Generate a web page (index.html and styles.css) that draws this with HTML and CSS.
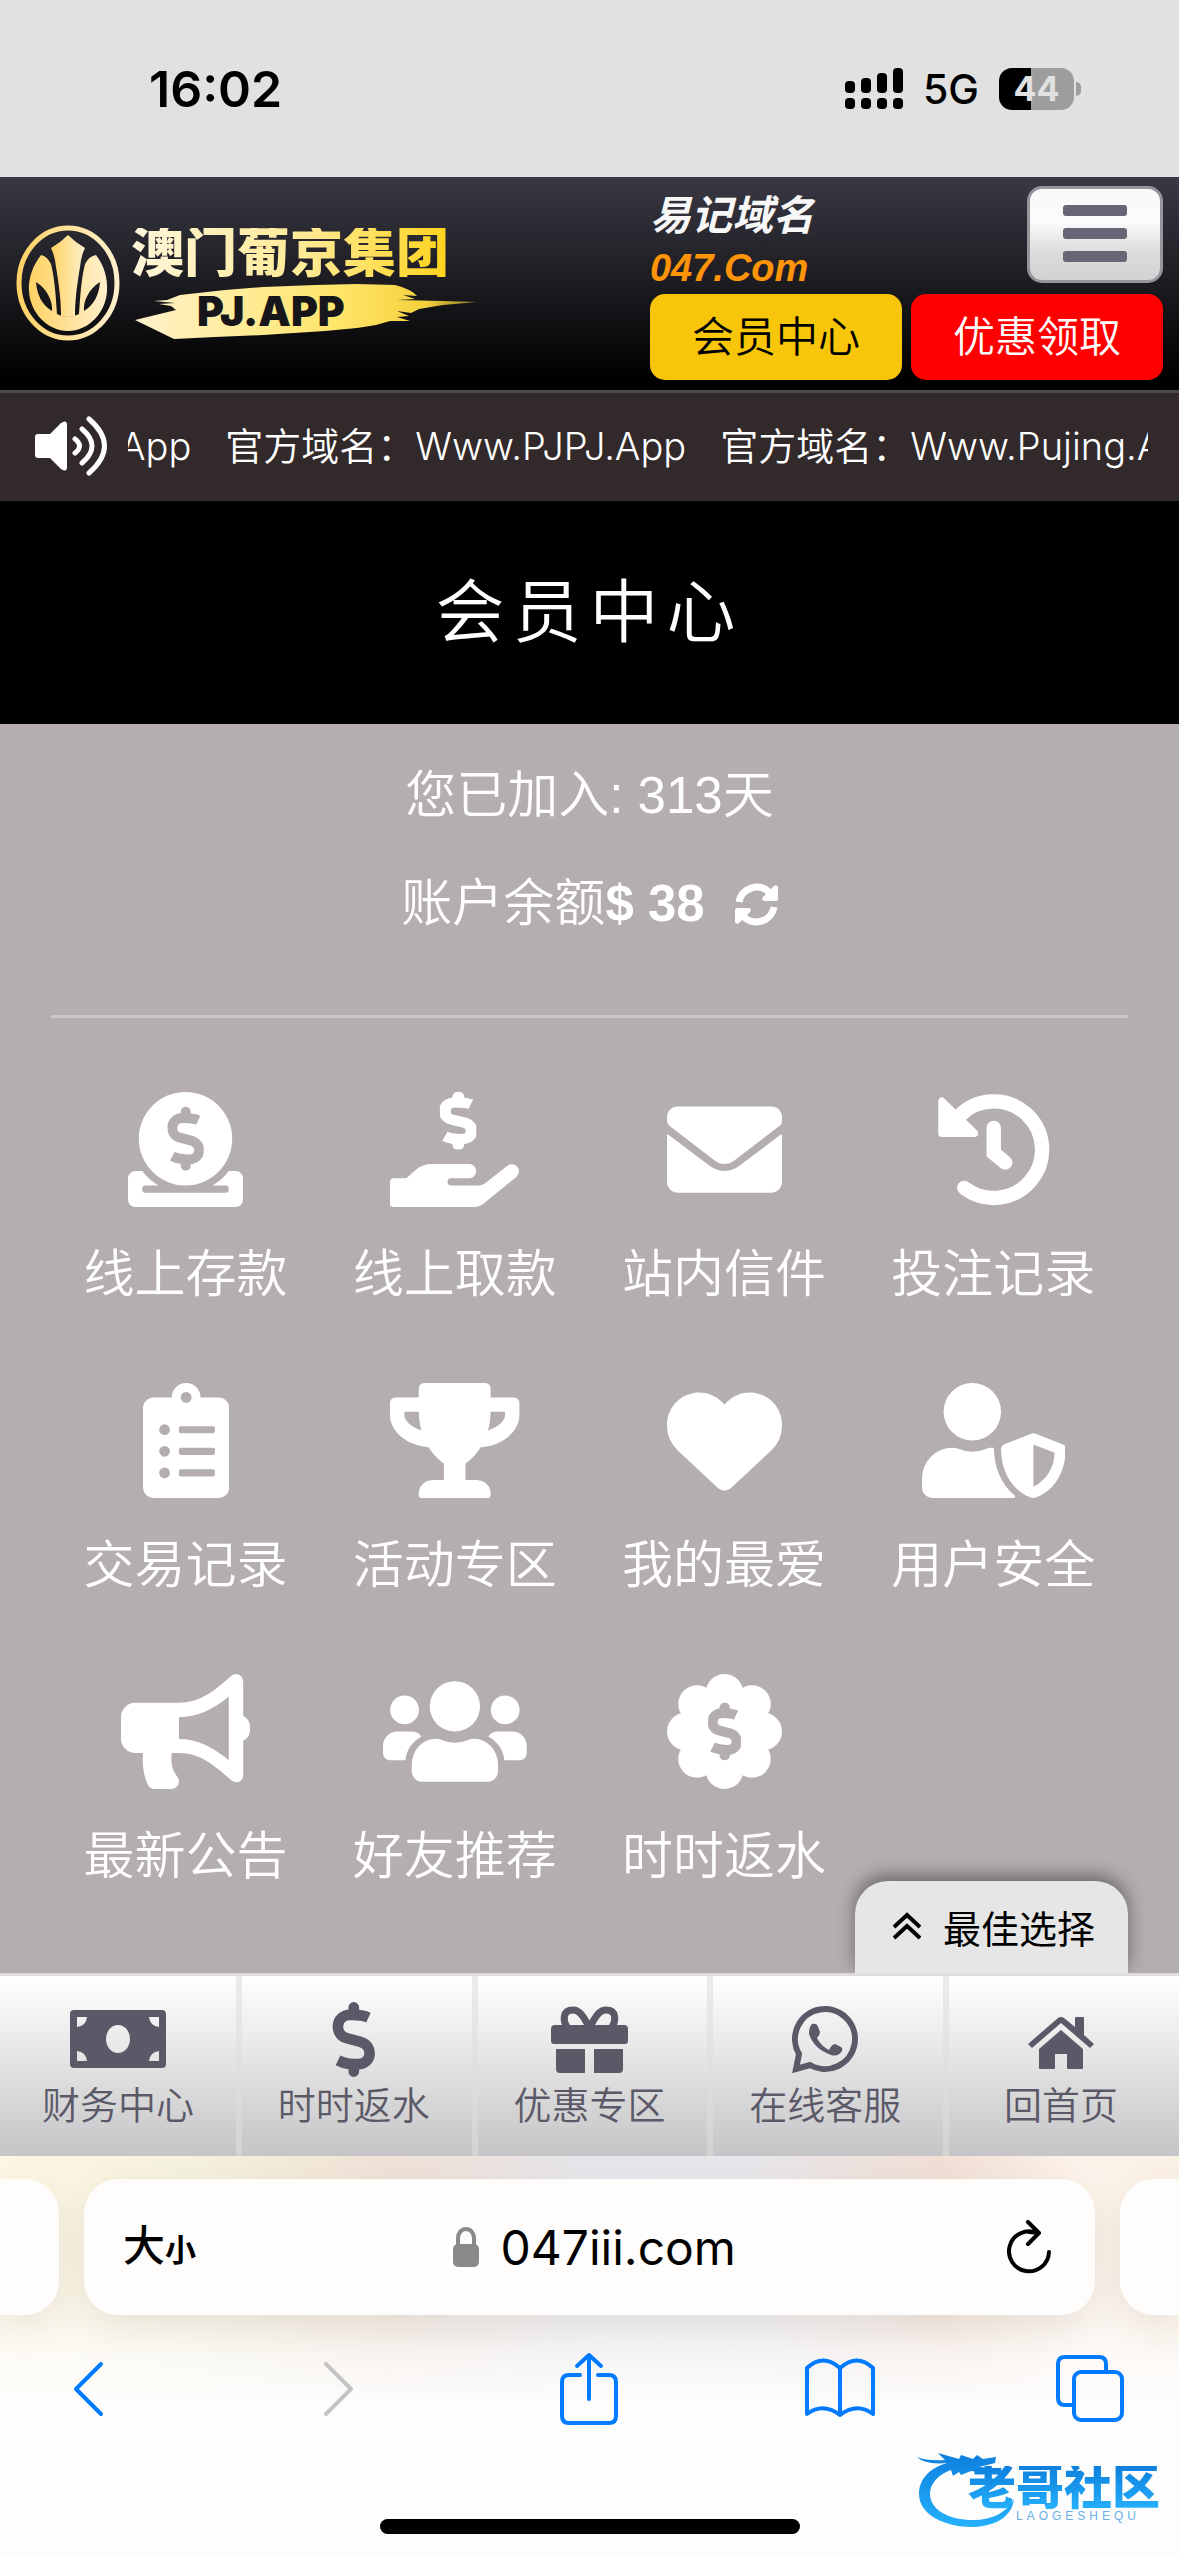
FILE: index.html
```
<!DOCTYPE html>
<html lang="zh-CN">
<head>
<meta charset="UTF-8">
<meta name="viewport" content="width=device-width, initial-scale=1.0">
<title>会员中心</title>
<link rel="stylesheet" href="styles.css">
</head>
<body>

<!-- shared dollar shape -->
<svg class="defs" aria-hidden="true">
    <symbol id="dollar" viewBox="0 0 160 288" preserveAspectRatio="none">
        <path d="M136 62C112 51 88 52 68 52C10 52 8 128 54 139L106 153C156 168 150 236 96 236C68 236 50 236 22 222" fill="none"/>
        <path d="M81 24V50M81 238V264" fill="none" stroke-linecap="round"/>
    </symbol>
</svg>

<div class="status">
    <span class="time">16:02</span>
    <div class="status-right">
        <svg width="58" height="42" viewBox="0 0 58 42">
            <rect x="0" y="13" width="10" height="12" rx="4"/><rect x="16" y="10" width="10" height="15" rx="4"/>
            <rect x="32" y="5" width="10" height="20" rx="4"/><rect x="48" y="0" width="10" height="25" rx="4"/>
            <rect x="0" y="30" width="10" height="11" rx="4"/><rect x="16" y="30" width="10" height="11" rx="4"/>
            <rect x="32" y="30" width="10" height="11" rx="4"/><rect x="48" y="30" width="10" height="11" rx="4"/>
        </svg>
        <span class="net">5G</span>
        <span class="battery">44</span>
    </div>
</div>

<header class="header">
    <a class="brand" href="#">
        <svg width="104" height="116" viewBox="0 0 104 116" aria-hidden="true">
            <defs>
                <linearGradient id="gold" x1="0" x2="1"><stop offset="0" stop-color="#ffd264"/><stop offset="1" stop-color="#fff0cd"/></linearGradient>
            </defs>
            <ellipse cx="52" cy="58" rx="49" ry="55" fill="none" stroke="url(#gold)" stroke-width="5"/>
            <path fill="url(#gold)" d="M52 10Q60 18 69 23Q65 31 64 42C61 60 59 75 59 91Q52 93 45 91C45 75 43 60 40 42Q39 31 35 23Q44 18 52 10Z"/>
            <path fill="url(#gold)" fill-rule="evenodd" d="M25 30Q31 31 35 39C39 55 40 75 41 89Q52 95 63 89C64 75 65 55 69 39Q73 31 80 30C88 40 92 54 91 66C90 88 72 106 52 106S14 88 13 66C12 54 17 40 25 30ZM20 57C21 70 26 80 36 86C37 76 31 64 20 57ZM84 57C73 64 67 76 68 86C78 80 83 70 84 57Z"/>
        </svg>
        <span class="brand-text">
            <span class="brand-name">澳门葡京集团</span>
            <span class="brand-site">
                <svg class="brush" width="343" height="55" viewBox="0 0 343 55" aria-hidden="true">
                    <defs>
                        <linearGradient id="paint" x1="0" x2="1"><stop offset="0" stop-color="#fff2cc"/><stop offset=".6" stop-color="#ffe568"/><stop offset=".85" stop-color="#f5d13c"/><stop offset="1" stop-color="#8f7a26"/></linearGradient>
                    </defs>
                    <path fill="url(#paint)" d="M0 36L41 26L36 22L24 20L40 19L19 17L32 16L45 11L90 6L128 3L180 1L222 0L260 1Q276 5 282 12L268 11L280 15L262 16L308 17L342 18L308 21L284 25L276 29L262 27L274 32L262 33L275 37L255 37L241 41L222 44L190 47L128 51L80 53L39 55Z"/>
                </svg>
                <span class="brand-domain">PJ.APP</span>
            </span>
        </span>
    </a>
    <div class="header-right">
        <div class="header-top">
            <div class="easy">
                <div class="easy-label">易记域名</div>
                <div class="easy-domain">047.Com</div>
            </div>
            <button class="menu-btn" type="button" aria-label="菜单">
                <span></span><span></span><span></span>
            </button>
        </div>
        <div class="header-btns">
            <a class="btn btn-member" href="#">会员中心</a>
            <a class="btn btn-promo" href="#">优惠领取</a>
        </div>
    </div>
</header>

<div class="notice">
    <svg width="72" height="60" viewBox="0 0 72 60" fill="none" stroke="#fff" stroke-width="5" stroke-linecap="round" aria-hidden="true">
        <path fill="#fff" stroke="none" d="M3 18H15L26 7Q32 3 32 9V51Q32 57 26 53L15 42H3Q0 42 0 39V21Q0 18 3 18Z"/>
        <path d="M40 23Q49 30 40 37M47 13Q67 30 47 47M54 3Q85 30 54 57"/>
    </svg>
    <div class="notice-window">
        <div class="notice-track">
            <span>App</span>
            <span>官方域名：Www.PJPJ.App</span>
            <span>官方域名：Www.Pujing.App</span>
        </div>
    </div>
</div>

<h1 class="title">会员中心</h1>

<main class="member">
    <div class="info">
        <div class="info-row">您已加入: 313天</div>
        <div class="info-row">账户余额<b>$ 38</b>
            <button class="refresh" type="button" aria-label="刷新">
                <svg width="43" height="43" viewBox="0 0 43 43">
                    <path fill="none" stroke="#fff" stroke-width="7" d="M4 19A18 18 0 0 1 34 9M39 24A18 18 0 0 1 9 34"/>
                    <path fill="#fff" d="M43 4V16Q43 18 41 18H29Q26 17 28 14L39 3Q42 1 43 4ZM0 39V27Q0 25 2 25H14Q17 26 15 29L4 40Q1 42 0 39Z"/>
                </svg>
            </button>
        </div>
    </div>
    <hr class="line">

    <nav class="grid">
        <a class="item" href="#">
            <svg viewBox="0 0 512 512"><circle cx="256" cy="208" r="208"/><path d="M32 352H64Q92 392 136 416H76Q64 416 64 428V436Q64 448 76 448H436Q448 448 448 436V428Q448 416 436 416H376Q420 392 448 352H480A32 32 0 0 1 512 384V480A32 32 0 0 1 480 512H32A32 32 0 0 1 0 480V384A32 32 0 0 1 32 352Z"/><use class="cut" href="#dollar" x="175" y="64" width="162" height="288"/></svg>
            <span>线上存款</span>
        </a>
        <a class="item" href="#">
            <svg viewBox="0 0 576 512"><path d="M16 384H72L122 341Q148 320 186 320H352A32 32 0 0 1 352 384H272A16 16 0 0 0 272 416H392Q410 416 422 407L523 328A32 32 0 0 1 564 377L420 494Q400 512 372 512H16A16 16 0 0 1 0 496V400A16 16 0 0 1 16 384Z"/><use class="coin" href="#dollar" x="222" y="0" width="162" height="256"/></svg>
            <span>线上取款</span>
        </a>
        <a class="item" href="#">
            <svg viewBox="0 0 512 512"><path d="M48 64C21 64 0 85 0 112V128Q0 142 12 151L218 309Q256 332 294 309L500 151Q512 142 512 128V112C512 85 491 64 464 64ZM0 194V400A48 48 0 0 0 48 448H464A48 48 0 0 0 512 400V194Q511 187 504 191L318 332Q256 372 194 332L8 191Q1 187 0 194Z"/></svg>
            <span>站内信件</span>
        </a>
        <a class="item" href="#">
            <svg viewBox="0 0 512 512" stroke="#fff" stroke-linecap="round"><path fill="none" stroke-width="64" d="M105 105A215 215 0 1 1 126 427M257 160V272L308 314"/><path stroke-width="32" stroke-linejoin="round" d="M26 40V184H172Z"/></svg>
            <span>投注记录</span>
        </a>
        <a class="item" href="#">
            <svg viewBox="0 0 384 512"><path fill-rule="evenodd" d="M48 64H128A64 64 0 0 1 256 64H336A48 48 0 0 1 384 112V464A48 48 0 0 1 336 512H48A48 48 0 0 1 0 464V112A48 48 0 0 1 48 64ZM192 40A24 24 0 0 0 192 88A24 24 0 0 0 192 40ZM96 184A24 24 0 0 0 96 232A24 24 0 0 0 96 184ZM96 280A24 24 0 0 0 96 328A24 24 0 0 0 96 280ZM96 376A24 24 0 0 0 96 424A24 24 0 0 0 96 376ZM168 192Q160 192 160 200V216Q160 224 168 224H312Q320 224 320 216V200Q320 192 312 192ZM168 288Q160 288 160 296V312Q160 320 168 320H312Q320 320 320 312V296Q320 288 312 288ZM168 384Q160 384 160 392V408Q160 416 168 416H312Q320 416 320 408V392Q320 384 312 384Z"/></svg>
            <span>交易记录</span>
        </a>
        <a class="item" href="#">
            <svg viewBox="0 0 576 512"><path fill-rule="evenodd" d="M152 0H424A24 24 0 0 1 448 24V64H552A24 24 0 0 1 576 88V144C576 216 500 280 404 286Q380 325 336 360V432H386Q440 436 448 484V500A12 12 0 0 1 436 512H140A12 12 0 0 1 128 500V484Q136 436 190 432H240V360Q196 325 172 286C76 280 0 216 0 144V88A24 24 0 0 1 24 64H128V24A24 24 0 0 1 152 0ZM64 128V144C64 166 92 196 140 212Q130 180 128 128ZM512 128H448Q446 180 436 212C484 196 512 166 512 144Z"/></svg>
            <span>活动专区</span>
        </a>
        <a class="item" href="#">
            <svg viewBox="0 0 512 512"><path d="M48 300L228 469Q256 490 284 469L464 300Q512 254 512 191V185C512 115 461 56 393 44C347 37 301 51 268 84L256 96L244 84C211 51 165 37 119 44C51 56 0 115 0 185V191Q0 254 48 300Z"/></svg>
            <span>我的最爱</span>
        </a>
        <a class="item" href="#">
            <svg viewBox="0 0 640 512"><circle cx="224" cy="128" r="128"/><path fill-rule="evenodd" d="M136 288Q150 288 158 292Q224 320 290 292Q298 288 306 288H320C320 370 350 450 414 502Q418 512 404 512H48A48 48 0 0 1 0 464V424A136 136 0 0 1 136 288ZM486 226Q496 222 506 226L628 274Q640 280 640 292C640 390 596 476 508 510Q496 514 484 510C396 476 352 390 352 292Q352 280 364 274ZM496 274V462C550 434 590 380 590 310Z"/></svg>
            <span>用户安全</span>
        </a>
        <a class="item" href="#">
            <svg viewBox="0 0 576 512"><path fill-rule="evenodd" d="M64 128H258C350 128 410 80 492 8Q500 0 512 0Q542 2 544 34V187Q574 200 576 242Q574 284 544 297V450Q542 482 512 482Q500 480 492 474C410 402 350 352 258 352H226C220 400 230 430 250 456C270 480 250 512 226 512H148Q130 512 122 498C100 450 94 410 98 352H64A64 64 0 0 1 0 288V192A64 64 0 0 1 64 128ZM258 192V289C340 289 410 325 480 384V100C410 158 340 192 258 192Z"/></svg>
            <span>最新公告</span>
        </a>
        <a class="item" href="#">
            <svg viewBox="0 0 640 512"><circle cx="320" cy="144" r="112"/><circle cx="96" cy="160" r="64"/><circle cx="544" cy="160" r="64"/><path d="M234 288Q246 288 254 292Q320 320 386 292Q394 288 406 288A106 116 0 0 1 512 404V432A48 48 0 0 1 464 480H176A48 48 0 0 1 128 432V404A106 116 0 0 1 234 288ZM64 256H128Q156 256 171 278Q106 316 100 384H32A32 32 0 0 1 0 352V320A64 64 0 0 1 64 256ZM576 256H512Q484 256 469 278Q534 316 540 384H608A32 32 0 0 0 640 352V320A64 64 0 0 0 576 256Z"/></svg>
            <span>好友推荐</span>
        </a>
        <a class="item" href="#">
            <svg viewBox="0 0 512 512"><circle cx="256" cy="256" r="190"/><circle cx="256" cy="84" r="84"/><circle cx="256" cy="428" r="84"/><circle cx="84" cy="256" r="84"/><circle cx="428" cy="256" r="84"/><circle cx="134" cy="134" r="84"/><circle cx="378" cy="134" r="84"/><circle cx="134" cy="378" r="84"/><circle cx="378" cy="378" r="84"/><use class="coin-cut" href="#dollar" x="183" y="128" width="146" height="256"/></svg>
            <span>时时返水</span>
        </a>
    </nav>

    <button class="best" type="button">
        <svg width="28" height="28" viewBox="0 0 28 28" fill="none" stroke="#000" stroke-width="4" aria-hidden="true"><path d="M1 15L14 3L27 15M1 26L14 14L27 26"/></svg>
        最佳选择
    </button>
</main>

<nav class="tabs">
    <a class="tab" href="#">
        <svg width="96" height="58" viewBox="0 0 96 58"><path fill-rule="evenodd" d="M4 0H92Q96 0 96 4V54Q96 58 92 58H4Q0 58 0 54V4Q0 0 4 0ZM48 15A12 14 0 0 0 48 43A12 14 0 0 0 48 15ZM7 7V17Q16 16 17 7ZM89 7V17Q80 16 79 7ZM7 51V41Q16 42 17 51ZM89 51V41Q80 42 79 51Z"/></svg>
        <span>财务中心</span>
    </a>
    <a class="tab" href="#">
        <svg class="thin" width="43" height="77" viewBox="0 0 160 288"><use href="#dollar" width="160" height="288"/></svg>
        <span>时时返水</span>
    </a>
    <a class="tab" href="#">
        <svg width="77" height="67" viewBox="0 0 77 67"><path d="M4 19H73Q77 19 77 23V35Q77 38 74 38H3Q0 38 0 35V23Q0 19 4 19ZM5 43H34V67H9Q5 67 5 63ZM43 43H72V63Q72 67 68 67H43Z"/><path fill="none" stroke="#5b5967" stroke-width="7" d="M38 21C31 7 27 4 22 4C11 4 12 15 16 21M39 21C46 7 50 4 55 4C66 4 65 15 61 21"/></svg>
        <span>优惠专区</span>
    </a>
    <a class="tab" href="#">
        <svg width="67" height="67" viewBox="0 0 67 67"><path fill="none" stroke="#5b5967" stroke-width="6" d="M7 48A30 30 0 1 1 18 59L4 63Z"/><path d="M20 18Q25 17 26 21L28 26Q28 29 25 32Q29 40 37 44Q40 38 43 38L49 41Q51 42 50 45Q46 51 39 49Q22 43 17 28Q17 21 20 18Z"/></svg>
        <span>在线客服</span>
    </a>
    <a class="tab" href="#">
        <svg width="66" height="60" viewBox="0 -8 66 60"><path d="M0 27L30 1Q33-1 36 1L47 10V1Q47 0 48 0H55Q56 0 56 1V18L66 27L62 31L33 6L4 31ZM11 32L33 13L55 32V51Q55 52 54 52H40Q39 52 39 51V37H27V51Q27 52 26 52H12Q11 52 11 51Z"/></svg>
        <span>回首页</span>
    </a>
</nav>

<footer class="browser">
    <div class="cards">
        <div class="card card-side card-prev"></div>
        <div class="card card-main">
            <button class="text-size" type="button" aria-label="大小"><span>大</span><span class="small">小</span></button>
            <div class="address">
                <svg width="26" height="40" viewBox="0 0 26 40" aria-hidden="true"><rect y="17" width="26" height="23" rx="5" fill="#8a8a8d"/><path fill="none" stroke="#8a8a8d" stroke-width="4" d="M5 18V11A8 9 0 0 1 21 11V18"/></svg>
                <input type="text" value="047iii.com" aria-label="网址">
            </div>
            <button class="reload" type="button" aria-label="重新载入">
                <svg width="44" height="54" viewBox="0 0 44 54" fill="none" stroke="#000" stroke-width="4" stroke-linecap="round" stroke-linejoin="round"><path d="M30 13A20 20 0 1 0 42 32M21 2L32 13L21 24M32 13L22 12"/></svg>
            </button>
        </div>
        <div class="card card-side card-next"></div>
    </div>
    <div class="toolbar">
        <button type="button" aria-label="后退"><svg width="32" height="56" viewBox="0 0 32 56"><path d="M29 3L4 28L29 53"/></svg></button>
        <button type="button" aria-label="前进" class="off"><svg width="32" height="56" viewBox="0 0 32 56"><path d="M3 3L28 28L3 53"/></svg></button>
        <button type="button" aria-label="分享"><svg width="58" height="74" viewBox="0 0 58 74"><path d="M20 23H9Q2 23 2 30V64Q2 71 9 71H49Q56 71 56 64V30Q56 23 49 23H38M29 47V3M17 14L29 3L41 14"/></svg></button>
        <button type="button" aria-label="书签"><svg width="72" height="62" viewBox="0 0 72 62"><path d="M36 10Q19-5 3 10V56Q19 44 36 57Q53 44 69 56V10Q53-5 36 10V57"/></svg></button>
        <button type="button" aria-label="标签页"><svg width="68" height="68" viewBox="0 0 68 68"><path d="M17 50H9Q2 50 2 43V9Q2 2 9 2H43Q50 2 50 9V17"/><rect x="18" y="17" width="48" height="48" rx="7"/></svg></button>
    </div>
    <div class="home-bar"></div>
    <div class="mark">
        <svg width="98" height="80" viewBox="0 0 98 80" aria-hidden="true">
            <defs><linearGradient id="sea" x2="0" y2="1"><stop offset="0" stop-color="#0d7fdd"/><stop offset="1" stop-color="#25b1fc"/></linearGradient></defs>
            <path fill="url(#sea)" d="M30 15C10 21 2 33 2 46C2 66 26 79 56 79C80 78 95 68 97 51C90 64 76 72 56 72C32 72 13 62 13 46C13 35 22 26 34 22L36 28L42 24L44 27L54 23L76 26L77 20L62 19L78 15L79 9L66 11L60 7L56 11L44 7L42 11L21 5L28 12Q10 13 0 9Q8 17 30 15Z"/>
        </svg>
        <div class="mark-text">
            <b>老哥社区</b>
            <span>LAOGESHEQU</span>
        </div>
    </div>
</footer>

</body>
</html>
```
FILE: styles.css
```
* {
    box-sizing: border-box;
}

body {
    margin: 0;
    min-height: 100vh;
    display: flex;
    flex-direction: column;
    background: #b4aeae;
    font-family: "Liberation Sans", "Noto Sans CJK SC", sans-serif;
    overflow-x: hidden;
}

a {
    color: inherit;
    text-decoration: none;
}

button {
    font-family: inherit;
    padding: 0;
    border: none;
    background: none;
    cursor: pointer;
}

svg {
    display: block;
    flex: none;
}

.defs {
    position: absolute;
    width: 0;
    height: 0;
}

/* status bar */
.status {
    height: 177px;
    padding: 0 98px 0 149px;
    display: flex;
    align-items: center;
    justify-content: space-between;
    background: #e1e1e1;
    font-family: Inter, sans-serif;
}

.time {
    font-size: 50px;
    font-weight: 600;
}

.status-right {
    display: flex;
    align-items: center;
    gap: 20px;
}

.net {
    font-size: 41px;
    font-weight: 500;
}

.battery {
    position: relative;
    width: 75px;
    line-height: 42px;
    border-radius: 13px;
    background: linear-gradient(90deg, #000 32px, #9d9d9d 32px);
    color: #e1e1e1;
    font-size: 34px;
    font-weight: 700;
    text-align: center;
    margin-right: 7px;
}

.battery::after {
    content: "";
    position: absolute;
    right: -7px;
    top: 14px;
    width: 5px;
    height: 14px;
    border-radius: 0 5px 5px 0;
    background: #9d9d9d;
}

/* header */
.header {
    display: flex;
    align-items: center;
    justify-content: space-between;
    padding: 9px 16px 10px;
    border-bottom: 3px solid #4a4a53;
    background: linear-gradient(#3a3944, #000 95%);
}

.brand {
    display: flex;
    align-items: center;
    gap: 11px;
}

.brand-text {
    display: flex;
    flex-direction: column;
    gap: 4px;
}

.brand-name {
    font-size: 53px;
    line-height: 52px;
    font-weight: 900;
    align-self: flex-start;
    background: linear-gradient(90deg, #fff6db, #ffea94 55%, #ffd31c);
    -webkit-background-clip: text;
    background-clip: text;
    color: transparent;
}

.brand-site {
    position: relative;
    height: 55px;
    padding-left: 66px;
}

.brush {
    position: absolute;
    left: 4px;
    top: 0;
}

.brand-domain {
    position: relative;
    font-family: Inter, sans-serif;
    font-size: 41px;
    line-height: 55px;
    font-weight: 900;
    color: #17171b;
}

.header-top {
    display: flex;
    align-items: flex-start;
    justify-content: space-between;
}

.easy {
    padding-top: 4px;
    line-height: 52px;
    font-weight: 700;
    font-style: italic;
}

.easy-label {
    font-size: 41px;
    color: #f7f7f7;
}

.easy-domain {
    font-size: 38px;
    color: #ff9408;
}

.menu-btn {
    width: 136px;
    height: 97px;
    display: flex;
    flex-direction: column;
    align-items: center;
    justify-content: center;
    gap: 12px;
    padding-bottom: 2px;
    border: 3px solid #95959d;
    border-radius: 15px;
    background: linear-gradient(#f9f9f9, #fbfbfb 35%, #dcdcda 70%, #d2d2d2);
}

.menu-btn span {
    width: 64px;
    height: 11px;
    border-radius: 3px;
    background: #666677;
}

.header-btns {
    display: flex;
    gap: 9px;
}

.btn {
    padding: 2px 42px 0;
    border-radius: 15px;
    font-size: 42px;
    line-height: 84px;
    font-weight: 350;
}

.btn-member {
    background: #f7c509;
    color: #000;
}

.btn-promo {
    background: #ff0000;
    color: #fff;
}

/* scrolling notice */
.notice {
    display: flex;
    align-items: center;
    gap: 21px;
    height: 108px;
    padding: 0 31px 2px 35px;
    background: #32292b;
    color: #fff;
}

.notice-window {
    flex: 1;
    min-width: 0;
    overflow: hidden;
}

.notice-track {
    display: flex;
    align-items: baseline;
    gap: 34px;
    margin-left: -8px;
    white-space: nowrap;
    font-family: Inter, "Noto Sans CJK SC", sans-serif;
    font-size: 38px;
    line-height: 60px;
    font-weight: 350;
}

.title {
    margin: 0;
    padding: 71px 0 69px;
    background: #000;
    color: #fff;
    font-size: 69px;
    line-height: 83px;
    font-weight: 350;
    letter-spacing: 8px;
    text-align: center;
}

/* member center */
.member {
    position: relative;
    flex: 1;
    padding: 18px 51px 78px;
    color: #fff;
    font-size: 51px;
}

.info-row {
    display: flex;
    align-items: center;
    justify-content: center;
    line-height: 108px;
    font-weight: 350;
}

.info-row b {
    font-weight: 700;
}

.refresh {
    margin-left: 30px;
}

.line {
    height: 3px;
    margin: 57px 0 74px;
    border: none;
    background: #c9c7c7;
}

.grid {
    display: grid;
    grid-template-columns: repeat(4, 1fr);
    row-gap: 70px;
}

.item {
    display: flex;
    flex-direction: column;
    align-items: center;
    gap: 30px;
    line-height: 76px;
    font-weight: 350;
}

.item svg {
    height: 115px;
    fill: #fff;
}

.cut {
    stroke: #b4aeae;
    stroke-width: 44px;
}

.coin-cut {
    stroke: #b4aeae;
    stroke-width: 50px;
}

.coin {
    stroke: #fff;
    stroke-width: 52px;
}

.best {
    position: absolute;
    right: 51px;
    bottom: 0;
    display: flex;
    align-items: center;
    gap: 22px;
    height: 92px;
    padding: 0 33px 2px 38px;
    border-radius: 33px 33px 0 0;
    background: #e6e6e6;
    box-shadow: 0 -6px 18px rgba(0, 0, 0, 0.4);
    clip-path: inset(-40px -40px 0 -40px);
    color: #000;
    font-size: 38px;
}

/* bottom tabs */
.tabs {
    display: flex;
    border-top: 3px solid #dddddd;
    background: linear-gradient(#fff, #c5c5c7);
}

.tab {
    flex: 1;
    height: 180px;
    padding-top: 24px;
    display: flex;
    flex-direction: column;
    align-items: center;
    color: #5b5967;
    font-size: 38px;
    line-height: 56px;
    font-weight: 350;
}

.tab + .tab {
    background: linear-gradient(#ececec, #d3d3d2) left / 6px 100% no-repeat;
}

.tab svg {
    fill: #5b5967;
    margin: auto;
}

.tab span {
    margin-bottom: 22px;
}

.thin {
    stroke: #5b5967;
    stroke-width: 40px;
}

/* browser bar */
.browser {
    position: relative;
    height: 402px;
    padding-top: 23px;
    background:
        linear-gradient(rgba(253, 253, 253, 0) 0, rgba(253, 253, 253, 0.2) 130px, #fdfdfd 250px),
        linear-gradient(90deg, #fdf6e3, #f5f2de 16%, #f0e1d6 33%, #e5e6ed 52%, #e8e6ea 64%, #f1dfd4 80%, #fdf3ea 92%, #fbf0e4);
}

.cards {
    display: flex;
    gap: 25px;
}

.card {
    height: 136px;
    background: #fefdfc;
    box-shadow: 0 12px 36px rgba(80, 60, 40, 0.1);
}

.card-side {
    width: 59px;
}

.card-prev {
    border-radius: 0 34px 34px 0;
}

.card-next {
    border-radius: 34px 0 0 34px;
}

.card-main {
    flex: 1;
    display: flex;
    align-items: center;
    justify-content: space-between;
    padding: 0 44px 0 39px;
    border-radius: 34px;
}

.text-size {
    display: flex;
    align-items: baseline;
    padding-top: 4px;
    color: #000;
    font-size: 42px;
    line-height: 56px;
    font-weight: 500;
}

.text-size .small {
    font-size: 31px;
    font-weight: 700;
}

.address {
    display: flex;
    align-items: center;
    gap: 22px;
}

.address input {
    width: 250px;
    padding: 0;
    border: none;
    background: none;
    color: #000;
    font-family: Inter, sans-serif;
    font-size: 48px;
}

.toolbar {
    display: flex;
    align-items: center;
    justify-content: space-between;
    height: 74px;
    margin-top: 37px;
    padding: 0 55px 0 54px;
}

.toolbar button {
    display: flex;
    justify-content: center;
    width: 68px;
}

.toolbar svg {
    fill: none;
    stroke: #007aff;
    stroke-width: 4;
    stroke-linecap: round;
    stroke-linejoin: round;
}

.toolbar .off svg {
    stroke: #c4c4c4;
}

.home-bar {
    width: 420px;
    height: 15px;
    margin: 93px auto 0;
    border-radius: 8px;
    background: #000;
}

/* site mark over the bottom corner */
.mark {
    position: absolute;
    right: 19px;
    bottom: 30px;
    width: 243px;
    height: 80px;
}

.mark-text {
    position: absolute;
    left: 51px;
    top: 18px;
    display: flex;
    flex-direction: column;
    white-space: nowrap;
}

.mark-text b {
    font-size: 48px;
    line-height: 44px;
    font-weight: 900;
    background: linear-gradient(#0d7fdd, #25b1fc);
    -webkit-background-clip: text;
    background-clip: text;
    color: transparent;
}

.mark-text span {
    padding-left: 48px;
    color: #6aaee6;
    font-size: 12px;
    line-height: 12px;
    letter-spacing: 4px;
}
```
